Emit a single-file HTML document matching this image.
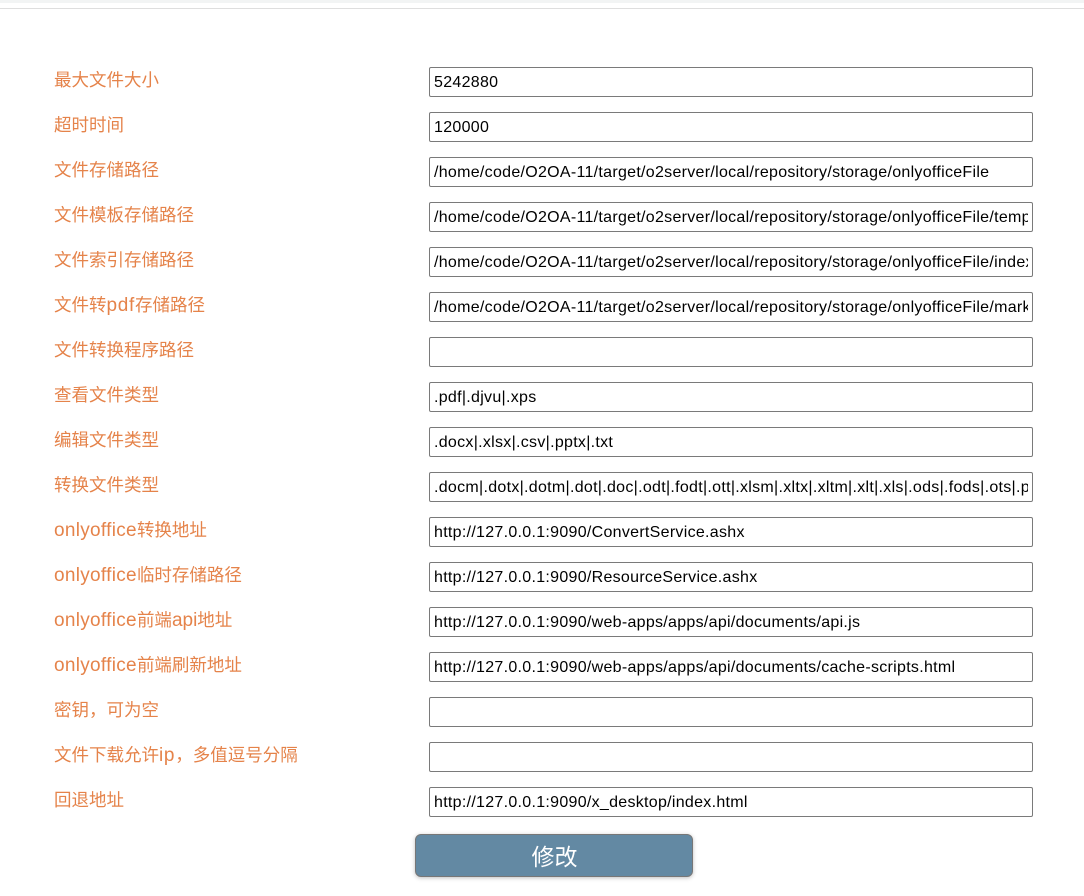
<!DOCTYPE html>
<html>
<head>
<meta charset="utf-8">
<style>
html,body{margin:0;padding:0;background:#fff;width:1084px;height:896px;overflow:hidden;font-family:"Liberation Sans","Noto Sans CJK SC",sans-serif}
.t1{position:absolute;left:0;top:0;width:1084px;height:3px;background:#f2f4f4}
.t2{position:absolute;left:0;top:8px;width:1084px;height:1px;background:#dedede}
.l{position:absolute;left:54px;font-size:17.5px;line-height:26px;height:26px;color:#e5834a;white-space:nowrap}
.l span{font-size:19px}
.o{letter-spacing:.3px}
.p{letter-spacing:.7px}
input{position:absolute;left:429px;width:604px;height:30px;box-sizing:border-box;border:1px solid #7a7a7a;border-radius:2px;padding:3px 4px 1px;margin:0;font-family:"Liberation Sans","Noto Sans CJK SC",sans-serif;font-size:16px;letter-spacing:.29px;color:#000;background:#fff;outline:none}
.b{position:absolute;left:415px;top:834px;width:278px;height:43px;box-sizing:border-box;border:1px solid #777;border-radius:6px;background:#6389a3;color:#fff;font-size:23px;line-height:44px;text-align:center;padding-left:1px;box-shadow:0 1px 4px rgba(0,0,0,.25)}
</style>
</head>
<body>
<div class="t1"></div><div class="t2"></div>
<div class="l" style="top:67px">最大文件大小</div><input style="top:67px" value="5242880">
<div class="l" style="top:112px">超时时间</div><input style="top:112px" value="120000">
<div class="l" style="top:157px">文件存储路径</div><input style="top:157px" value="/home/code/O2OA-11/target/o2server/local/repository/storage/onlyofficeFile">
<div class="l" style="top:202px">文件模板存储路径</div><input style="top:202px" value="/home/code/O2OA-11/target/o2server/local/repository/storage/onlyofficeFile/template">
<div class="l" style="top:247px">文件索引存储路径</div><input style="top:247px" value="/home/code/O2OA-11/target/o2server/local/repository/storage/onlyofficeFile/index">
<div class="l" style="top:292px">文件转<span class="p">pdf</span>存储路径</div><input style="top:292px" value="/home/code/O2OA-11/target/o2server/local/repository/storage/onlyofficeFile/markdown">
<div class="l" style="top:337px">文件转换程序路径</div><input style="top:337px" value="">
<div class="l" style="top:382px">查看文件类型</div><input style="top:382px" value=".pdf|.djvu|.xps">
<div class="l" style="top:427px">编辑文件类型</div><input style="top:427px" value=".docx|.xlsx|.csv|.pptx|.txt">
<div class="l" style="top:472px">转换文件类型</div><input style="top:472px" value=".docm|.dotx|.dotm|.dot|.doc|.odt|.fodt|.ott|.xlsm|.xltx|.xltm|.xlt|.xls|.ods|.fods|.ots|.pptm|.ppt">
<div class="l" style="top:517px"><span class="o">onlyoffice</span>转换地址</div><input style="top:517px" value="http://127.0.0.1:9090/ConvertService.ashx">
<div class="l" style="top:562px"><span class="o">onlyoffice</span>临时存储路径</div><input style="top:562px" value="http://127.0.0.1:9090/ResourceService.ashx">
<div class="l" style="top:607px"><span class="o">onlyoffice</span>前端<span>api</span>地址</div><input style="top:607px" value="http://127.0.0.1:9090/web-apps/apps/api/documents/api.js">
<div class="l" style="top:652px"><span class="o">onlyoffice</span>前端刷新地址</div><input style="top:652px" value="http://127.0.0.1:9090/web-apps/apps/api/documents/cache-scripts.html">
<div class="l" style="top:697px">密钥，可为空</div><input style="top:697px" value="">
<div class="l" style="top:742px">文件下载允许<span class="p">ip</span>，多值逗号分隔</div><input style="top:742px" value="">
<div class="l" style="top:787px">回退地址</div><input style="top:787px" value="http://127.0.0.1:9090/x_desktop/index.html">
<div class="b">修改</div>
</body>
</html>
